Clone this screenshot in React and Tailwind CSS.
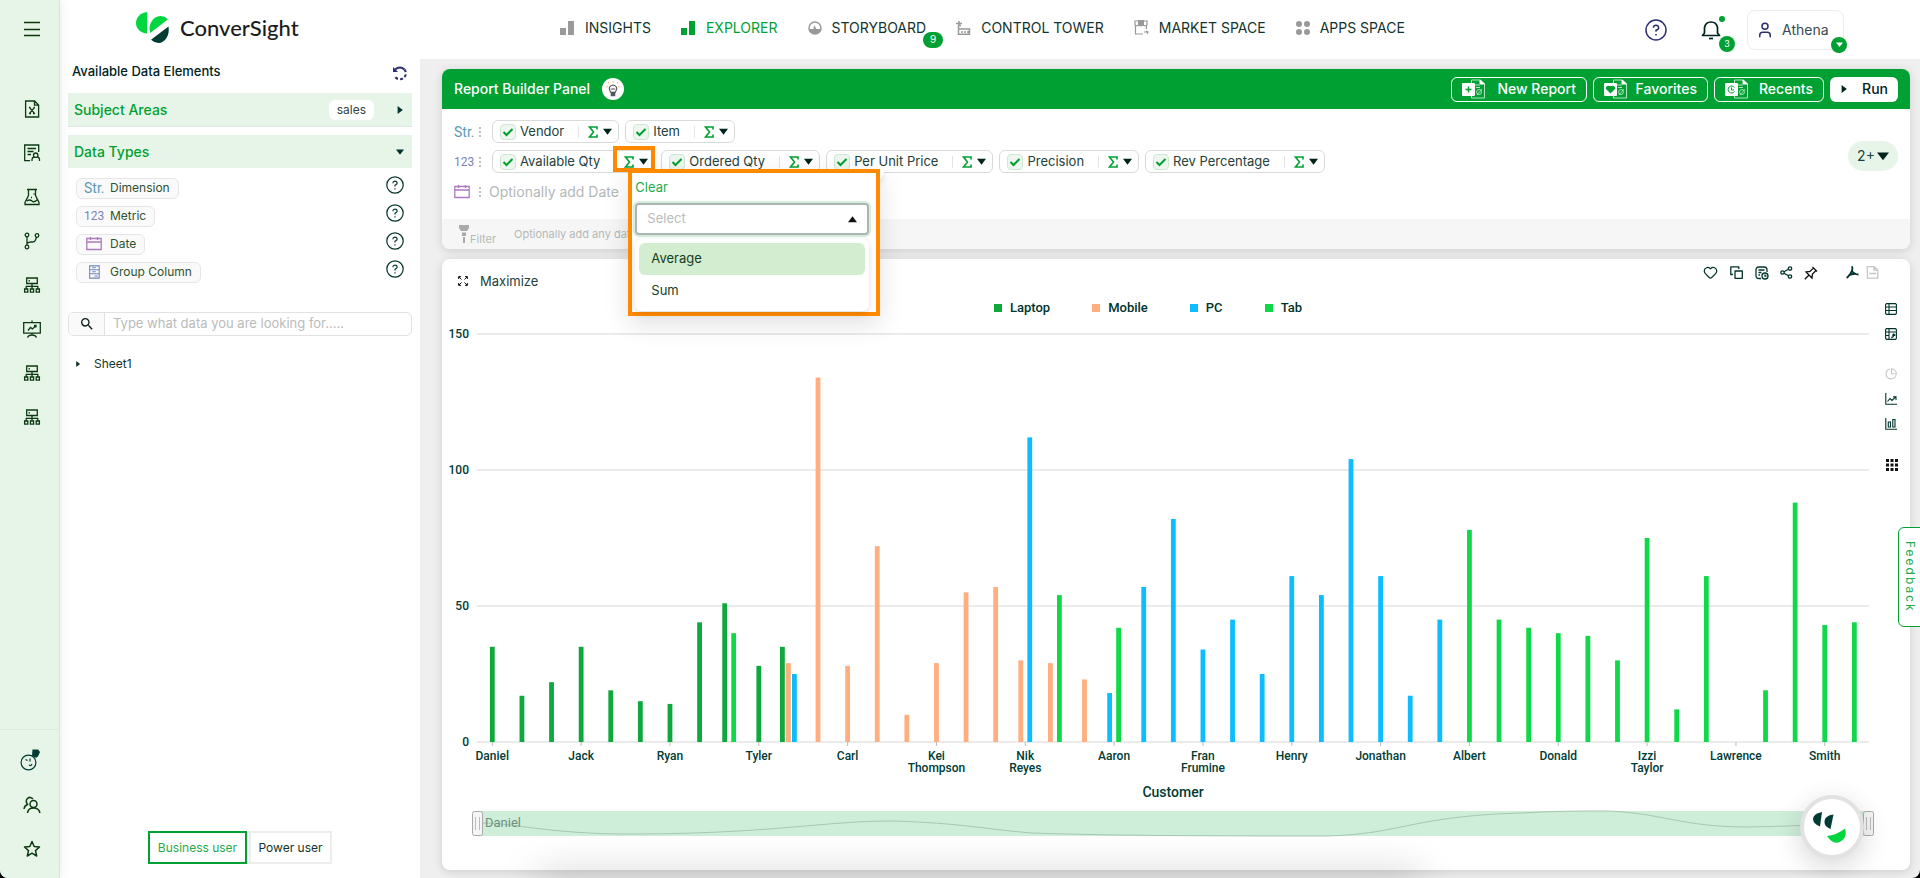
import { Heart, User } from 'lucide-react'
import { MdSearch } from 'react-icons/md'

const DATA = [
  { name: 'Daniel', laptop: 35 },
  { laptop: 17 },
  { laptop: 22 },
  { name: 'Jack', laptop: 35 },
  { laptop: 19 },
  { laptop: 15 },
  { name: 'Ryan', laptop: 14 },
  { laptop: 44 },
  { laptop: 51, tab: 40 },
  { name: 'Tyler', laptop: 28 },
  { laptop: 35, mobile: 29, pc: 25 },
  { mobile: 134 },
  { name: 'Carl', mobile: 28 },
  { mobile: 72 },
  { mobile: 10 },
  { name: 'Kei Thompson', mobile: 29 },
  { mobile: 55 },
  { mobile: 57 },
  { name: 'Nik Reyes', mobile: 30, pc: 112 },
  { mobile: 29, tab: 54 },
  { mobile: 23 },
  { name: 'Aaron', pc: 18, tab: 42 },
  { pc: 57 },
  { pc: 82 },
  { name: 'Fran Frumine', pc: 34 },
  { pc: 45 },
  { pc: 25 },
  { name: 'Henry', pc: 61 },
  { pc: 54 },
  { pc: 104 },
  { name: 'Jonathan', pc: 61 },
  { pc: 17 },
  { pc: 45 },
  { name: 'Albert', tab: 78 },
  { tab: 45 },
  { tab: 42 },
  { name: 'Donald', tab: 40 },
  { tab: 39 },
  { tab: 30 },
  { name: 'Izzi Taylor', tab: 75 },
  { tab: 12 },
  { tab: 61 },
  { name: 'Lawrence' },
  { tab: 19 },
  { tab: 88 },
  { name: 'Smith', tab: 43 },
  { tab: 44 },
]

const SERIES = [
  { key: 'laptop', label: 'Laptop', color: '#0fa83c' },
  { key: 'mobile', label: 'Mobile', color: '#ffae80' },
  { key: 'pc', label: 'PC', color: '#0dbdff' },
  { key: 'tab', label: 'Tab', color: '#0fd948' },
]

const METRICS = ['Ordered Qty', 'Per Unit Price', 'Precision', 'Rev Percentage']

/* ---------- icons ---------- */

function Icon({ size = 16, sw = 1.3, children, className, box = 16 }) {
  return (
    <svg
      width={size}
      height={size}
      viewBox={`0 0 ${box} ${box}`}
      fill="none"
      stroke="currentColor"
      strokeWidth={sw}
      className={className}
      aria-hidden="true"
    >
      {children}
    </svg>
  )
}

const MenuIcon = () => (
  <Icon size={16} sw={1.4}>
    <path d="M0 1.500h16M0 8.500h16M0 14.500h16" />
  </Icon>
)

const FileX = () => (
  <Icon size={18} box={18}>
    <path d="M2.600 1h9l4 4v12h-13zM11.500 1v4.200h4M6.800 7.800l4.400 5.400M11.200 7.800l-4.400 5.400M6 13.500h2M10 13.500h2M6 7.500h1.500M10.500 7.500h1.500" />
  </Icon>
)

const ReportUser = () => (
  <Icon size={18} box={18}>
    <path d="M7 16.700H1.700V1h14V8M4.500 4.500h8.500M4.500 7.500h6M4.500 10.500h3.500M9 17v-1.500q0-2 2-2.500M16.500 17v-1.500q0-2-2-2.500" />
    <circle cx="12.700" cy="11.200" r="2.200" />
  </Icon>
)

const Flask = () => (
  <Icon size={18} box={18}>
    <path d="M4 1.500h10M5.500 1.500v6L2 14.500v2h14v-2L12.500 7.500v-6M4 13q2.500-2 5 0t5.500-1.500M8 9.500h1M10.500 6h1" />
  </Icon>
)

const Branch = () => (
  <Icon size={18} box={18}>
    <circle cx="4" cy="3" r="1.800" />
    <circle cx="4" cy="15" r="1.800" />
    <circle cx="14" cy="3.500" r="1.800" />
    <path d="M4 4.800v8.400M4 11.500q1.500-1.500 4-1.500h1.500q2.500 0 3-2l1-2.800" />
  </Icon>
)

const Sitemap = () => (
  <Icon size={18} box={18}>
    <path d="M3.700 2h10.600v5.500H3.700zM5.500 4.800h1.500M9 7.500v6M3.200 13v-2.700h11.600V13M1.600 13h3.200v3.200H1.600zM7.400 13h3.200v3.200H7.400zM13.200 13h3.200v3.200h-3.200z" />
  </Icon>
)

const Board = () => (
  <Icon size={18} box={18}>
    <path d="M.7 2.700h16.600v10.500H.7zM9 .5v2.200M9 13v2M4.500 17.500q1-2.500 4.500-2.500t4.500 2.500M5 10.500l2.500-3 2 1.500L13 5.500M11 5.500h2v2" />
  </Icon>
)

const Athena = () => (
  <Icon size={24} box={24} sw={1.2} className="text-[#003c34]">
    <circle cx="8.500" cy="14.500" r="7.400" />
    <path d="M5.500 11.500l2 1M10 10.500v3M9 17q2 1.500 3-1" />
    <path d="M12.500 1.500h5.500l2 2.500-1.500 3.500-1.500 2h-2l-3-2z" fill="currentColor" stroke="none" />
  </Icon>
)

const Users = () => (
  <Icon size={18} box={18} sw={1.500}>
    <circle cx="10.500" cy="8" r="3.500" />
    <path d="M4.500 17q.5-5 6-5t6.500 5M1 13q.5-3.500 3.500-4.500Q2 5 4.500 2.500T10 3" />
  </Icon>
)

const Star = () => (
  <Icon size={18} box={18} sw={1.500}>
    <path d="M9 1.500l2.200 5 5.300.5-4 3.600 1.200 5.400L9 13.200 4.300 16l1.200-5.400-4-3.600 5.300-.5z" strokeLinejoin="round" />
  </Icon>
)

const Help = ({ size = 18 }) => (
  <Icon size={size} box={18} sw={1.200}>
    <circle cx="9" cy="9" r="8.200" />
    <path d="M6.800 7.200Q7 5.200 9 5.200t2.200 1.900Q11.200 8.500 9 9.200v1.300M9 12.200v1.200" />
  </Icon>
)

const Caret = ({ size = 8, dir = 'down', className }) => {
  const d = { down: 'M0 2h10L5 8.500z', right: 'M2 0v10L8.500 5z', up: 'M0 8h10L5 1.500z' }[dir]
  return (
    <svg width={size} height={size} viewBox="0 0 10 10" fill="currentColor" className={className} aria-hidden="true">
      <path d={d} />
    </svg>
  )
}

const StrIcon = () => <span className="w-5 font-['Roboto',sans-serif] text-sm leading-4 text-[#5b9bb0]">Str.</span>
const NumIcon = () => <span className="w-5 font-['Roboto',sans-serif] text-xs leading-4 text-[#7c83b5]">123</span>
const DateIcon = () => (
  <Icon size={16} className="text-[#ad7abf]">
    <path d="M.8 2.500h14.400v11H.8zM.8 6h14.400M4.500 1v3M11.500 1v3" />
  </Icon>
)
const GroupIcon = () => (
  <Icon size={14} sw={1.200} className="text-[#6f86bb]">
    <path d="M3 1h11v14H3zM3 5.500h11M3 10h11M6 3.200h4M6 7.800h4M8.500 12.500h4" />
  </Icon>
)

const Logo = () => (
  <svg width="34" height="32" viewBox="0 0 34 32" aria-hidden="true">
    <path d="M11 0v21.500C4.500 21 0 16.500 0 11S4.500.5 11 0z" fill="#00d63f" />
    <path d="M14.200 21C11.500 13 17 4 24.500 4q4 0 7.500 3.200z" fill="#00d63f" />
    <path d="M32.500 14.500C34 23 29 31 22.500 31q-4 0-7.500-3.200z" fill="#003c34" />
  </svg>
)

const ICONS_NAV = {
  bars: (
    <svg width="15" height="14" viewBox="0 0 15 14" fill="currentColor" aria-hidden="true">
      <path d="M0 7h6v7H0zM8 0h6v14H8z" />
    </svg>
  ),
  gauge: (
    <svg width="14" height="14" viewBox="0 0 14 14" aria-hidden="true">
      <circle cx="7" cy="7" r="6" fill="none" stroke="currentColor" strokeWidth="1.500" />
      <path d="M1.500 8h4L6 4l2.500 4h4q-1 5-5.500 5T1.500 8z" fill="currentColor" />
    </svg>
  ),
  tower: (
    <svg width="15" height="14" viewBox="0 0 15 14" aria-hidden="true">
      <path d="M0 2.500h6M3 0v4.500M2 4.500h3M2.500 5v8.200h11V8H3M6 10v2M9 10v2M12 10v2" fill="none" stroke="currentColor" strokeWidth="1.500" />
    </svg>
  ),
  market: (
    <svg width="15" height="15" viewBox="0 0 15 15" aria-hidden="true">
      <path d="M4 0h6v5q-3 2-6 0z" fill="currentColor" />
      <path d="M1 1h12v4q-2 1.500-4 0-2.500 1.500-4 0-2 1.500-4 0zM1.500 5v9H9M12.500 5v4M10 12h4M12 11l2 1-1 2" fill="none" stroke="currentColor" strokeWidth="1.200" />
    </svg>
  ),
  apps: (
    <svg width="14" height="14" viewBox="0 0 14 14" fill="currentColor" aria-hidden="true">
      <circle cx="3" cy="3" r="3" />
      <circle cx="11" cy="3" r="3" />
      <circle cx="3" cy="11" r="3" />
      <circle cx="11" cy="11" r="3" />
    </svg>
  ),
}

const NAV = [
  { icon: 'bars', label: 'INSIGHTS' },
  { icon: 'bars', label: 'EXPLORER', active: true },
  { icon: 'gauge', label: 'STORYBOARD', badge: 9 },
  { icon: 'tower', label: 'CONTROL TOWER' },
  { icon: 'market', label: 'MARKET SPACE' },
  { icon: 'apps', label: 'APPS SPACE' },
]

const RAIL = [
  { icon: <FileX />, label: 'Files' },
  { icon: <ReportUser />, label: 'Reports' },
  { icon: <Flask />, label: 'Lab' },
  { icon: <Branch />, label: 'Flows' },
  { icon: <Sitemap />, label: 'Datasets' },
  { icon: <Board />, label: 'Boards' },
  { icon: <Sitemap />, label: 'Connectors' },
  { icon: <Sitemap />, label: 'Servers' },
]

/* ---------- layout parts ---------- */

function Rail() {
  return (
    <aside className="relative z-10 flex w-15 shrink-0 flex-col items-center border-r border-[#d3e6d5] bg-[#e7f5e8] pl-1 text-[#0b3a12] shadow-[2px_0_10px_rgba(0,0,0,0.06)]">
      <button aria-label="Menu" className="mt-5 flex h-[18px] items-center">
        <MenuIcon />
      </button>
      <nav className="mt-[62px] flex flex-col gap-[26px]">
        {RAIL.map((item) => (
          <button key={item.label} aria-label={item.label}>
            {item.icon}
          </button>
        ))}
      </nav>
      <div className="mt-auto -ml-1 flex w-15 flex-col items-center gap-6 border-t border-[#dcebdd] pt-[18px] pb-5 pl-1">
        <button aria-label="Athena assistant">
          <Athena />
        </button>
        <button aria-label="Users">
          <Users />
        </button>
        <button aria-label="Starred" className="mt-0.5">
          <Star />
        </button>
      </div>
    </aside>
  )
}

function Header() {
  return (
    <header className="flex h-[59px] shrink-0 items-center bg-white">
      <div className="flex w-[500px] items-center gap-[10px] pb-1 pl-[76px]">
        <Logo />
        <span className="font-['Lato',sans-serif] text-[22px] leading-8 font-medium text-[#1c1c1c]">ConverSight</span>
      </div>
      <nav className="flex items-center gap-[30px] pb-1 text-sm">
        {NAV.map((item) => (
          <a key={item.label} href="#" className={`relative flex items-center gap-[10px] whitespace-nowrap ${item.active ? 'text-[#00a132]' : 'text-[#999]'}`}>
            {ICONS_NAV[item.icon]}
            <span className={item.active ? '' : 'text-[#12332d]'}>{item.label}</span>
            {item.badge && (
              <span className="absolute top-3.5 -right-[17px] flex h-4 w-5 items-center justify-center rounded-full bg-[#00a132] text-[10px] text-white">
                {item.badge}
              </span>
            )}
          </a>
        ))}
      </nav>
      <div className="ml-auto flex items-center pr-[76px]">
        <button aria-label="Help" className="mr-[34px] text-[#2b2f6b]">
          <Help size={22} />
        </button>
        <button aria-label="Notifications" className="relative mr-[26px] text-[#00231e]">
          <Icon size={20} box={20} sw={1.700}>
            <path d="M1.500 15.500h17l-2-2.500V7.500q-1-5.500-6.500-5.500T3.500 7.500V13z" strokeLinejoin="round" />
            <path d="M8 18.500h4" />
          </Icon>
          <span className="absolute -top-1 -right-1 size-1.5 rounded-full bg-[#00a132]" />
          <span className="absolute top-4 -right-3.5 flex size-4 items-center justify-center rounded-full bg-[#00a132] text-[9px] text-white">3</span>
        </button>
        <button className="relative flex h-10 w-[97px] items-center gap-2 rounded-lg border border-[#ececec] pl-2 text-sm text-[#3a4a52]">
          <User size={18} strokeWidth={2} className="text-[#2b2f6b]" />
          Athena
          <span className="absolute -right-1 -bottom-1 flex size-4 items-center justify-center rounded-full bg-[#00a132] text-white">
            <Caret size={7} />
          </span>
        </button>
      </div>
    </header>
  )
}

const TYPES = [
  { icon: <StrIcon />, label: 'Dimension' },
  { icon: <NumIcon />, label: 'Metric' },
  { icon: <DateIcon />, label: 'Date' },
  { icon: <GroupIcon />, label: 'Group Column' },
]

function DataPanel() {
  return (
    <section className="flex w-[360px] shrink-0 flex-col bg-white px-2 text-[#12332d]">
      <div className="flex h-[34px] items-center justify-between pr-1 pl-1">
        <h2 className="pb-2 text-[13px] font-medium text-[#00231e]">Available Data Elements</h2>
        <button aria-label="Reset" className="pb-1 text-[#2b2f6b]">
          <Icon sw={2}>
            <path d="M3 3.500Q8-.5 12.500 3.500" />
            <path d="M12.500 3.500a6 6 0 1 1-10 6.500" strokeDasharray="3 2" />
            <path d="M1 1v5h5z" fill="currentColor" stroke="none" />
          </Icon>
        </button>
      </div>
      <button className="flex h-[34px] items-center border-b border-[#dfe6df] bg-[#e7f5e8] pr-2 pl-1.5 text-sm font-medium text-[#00a132]">
        Subject Areas
        <span className="ml-auto rounded-md bg-white px-2 text-xs leading-5 font-normal text-[#33453f]">sales</span>
        <Caret dir="right" className="ml-[22px] text-[#00332b]" />
      </button>
      <button className="mt-2 flex h-[33px] items-center justify-between bg-[#e7f5e8] pr-2 pl-1.5 text-sm font-medium text-[#00a132]">
        Data Types
        <Caret className="text-[#00332b]" />
      </button>
      <ul className="mt-1 flex flex-col px-2">
        {TYPES.map((t) => (
          <li key={t.label} className="flex h-7 items-center justify-between">
            <span className="mt-1 flex h-[21px] items-center rounded-md border border-[#e6e6e6] bg-[#fafafa] pr-2 pl-[7px] text-xs text-[#2f5230]">
              <span className="mr-1.5 flex w-5 justify-center">{t.icon}</span>
              {t.label}
            </span>
            <button aria-label={`About ${t.label}`} className="-mt-0.5 text-[#00332b]">
              <Help />
            </button>
          </li>
        ))}
      </ul>
      <label className="mt-7 flex h-6 overflow-hidden rounded-md border border-[#e2e2e2]">
        <span className="flex w-9 items-center justify-center border-r border-[#e2e2e2] bg-[#fafafa] text-[#0a1f1b]">
          <MdSearch size={16} aria-label="Search" />
        </span>
        <input className="min-w-0 flex-1 px-2 text-[13px] outline-none placeholder:text-[#b9bcbb]" placeholder="Type what data you are looking for....." />
      </label>
      <button className="mt-5 flex items-center gap-[13px] pl-[7px] text-xs">
        <Caret size={6} dir="right" />
        Sheet1
      </button>
      <div className="mt-auto mb-3.5 flex justify-center gap-0.5 text-xs">
        <button className="h-[33px] w-[99px] border-2 border-[#00a132] whitespace-nowrap text-[#1fac4b]">Business user</button>
        <button className="h-[33px] w-[83px] border-2 border-[#ededed] whitespace-nowrap">Power user</button>
      </div>
    </section>
  )
}

const Check = () => (
  <span className="flex size-4 items-center justify-center rounded border border-[#cfe8d3] bg-[#eef7ef] text-[#00a132]">
    <Icon size={12} box={12} sw={2}>
      <path d="M1.500 6l3 3 6-6" />
    </Icon>
  </span>
)

const Sigma = () => (
  <svg width="10" height="12" viewBox="0 0 10 12" fill="none" stroke="#00a132" strokeWidth="1.600" aria-hidden="true">
    <path d="M9 3.500V1H1.500L5.500 6l-4 5H9V8.500" />
  </svg>
)

function Chip({ label, open }) {
  return (
    <div className="relative flex h-[23px] items-center rounded-md border border-[#d8dbda] bg-white pr-1.5 pl-[7px] text-[13px] whitespace-nowrap text-[#23413b]">
      <Check />
      <span className="mr-3.5 ml-1">{label}</span>
      <span className="mr-[9px] h-3 border-l border-[#e4e4e4]" />
      <button className="flex items-center gap-[5px] text-[#00231e]" aria-label={`${label} aggregation`}>
        <Sigma />
        <Caret size={9} />
      </button>
      {open && (
        <>
          <span className="absolute -top-[5px] -right-px z-20 h-[26px] w-[42px] border-4 border-[#ff8a00]" />
          <span className="absolute top-3.5 -right-[230px] z-20 size-4 rounded-full bg-white shadow-md" />
          <Aggregation />
        </>
      )}
    </div>
  )
}

function Aggregation() {
  return (
    <div className="absolute top-[18px] -right-[226px] z-30 h-[147px] w-[252px] border-4 border-[#ff8a00] bg-white px-[3px] pt-[5px] shadow-[0_8px_24px_rgba(0,0,0,0.12)]">
      <button className="block text-[13px] leading-[18px] text-[#1fac4b]">Clear</button>
      <button className="mt-[7px] flex h-8 w-[234px] items-center justify-between rounded border-2 border-[#a9b6b4] pr-2.5 pl-2.5 text-[13px] text-[#b9bcbb] ring-2 ring-[#d8eedb]">
        Select
        <Caret size={9} dir="up" className="text-[#111]" />
      </button>
      <ul className="mt-1 w-[234px] rounded-md p-1 text-[13px] text-[#163d1d] shadow-[0_2px_6px_rgba(0,0,0,0.14)]">
        <li className="flex h-8 items-center rounded-md bg-[#d2edd0] px-3">Average</li>
        <li className="flex h-8 items-center px-3">Sum</li>
      </ul>
    </div>
  )
}

const Dots = () => (
  <svg width="3" height="10" viewBox="0 0 3 10" fill="#bcc2c0" aria-hidden="true">
    <path d="M0 0h2v2H0zM0 4h2v2H0zM0 8h2v2H0z" />
  </svg>
)

const DocIcon = ({ children }) => (
  <svg width="24" height="20" viewBox="0 0 24 20" fill="none" stroke="white" aria-hidden="true">
    <path d="M9.500 4V1h9l4 4v14h-13v-3M12 6h6M14 8.500h4" opacity=".7" />
    <path d="M18 1v4h4.500z" fill="white" />
    <circle cx="17" cy="13" r="2.500" opacity=".6" />
    <path d="M15 16l5-6" opacity=".6" />
    <rect x="0" y="4" width="13" height="13" rx="1" fill="white" stroke="none" />
    <g stroke="#00a132" strokeWidth="1.500">{children}</g>
  </svg>
)

const ACTIONS = [
  { label: 'New Report', width: 'w-[136px]', icon: <path d="M3.500 10.500h6M6.500 7.500v6" /> },
  { label: 'Favorites', width: 'w-[115px]', icon: <path d="M6.500 13.500l-4-4q0-3 4-1.500 4-1.500 4 1.500z" fill="#00a132" /> },
  { label: 'Recents', width: 'w-[110px]', icon: <path d="M9.500 8.500a3.500 3.500 0 1 0 0 4M6.500 8.500v2.500h2.500" strokeWidth="1" /> },
]

function Builder() {
  return (
    <section className="rounded-lg bg-white shadow-[0_2px_10px_rgba(0,0,0,0.14)]">
      <div className="flex h-10 items-center gap-3 rounded-t-lg bg-[#00a132] px-3 text-sm font-medium text-white">
        <h1 className="whitespace-nowrap">Report Builder Panel</h1>
        <span className="flex size-[22px] items-center justify-center rounded-full bg-white text-[#555]">
          <Icon size={18} sw={1}>
            <path d="M5.500 10q-2.500-4.500 2.500-5.500 5 1 2.500 5.500l-.5 1h-4zM6 8h4" />
            <path d="M6.500 12h3v2h-3z" fill="currentColor" />
            <path d="M8 1v1.500M2 6h1.500M12.500 6H14M3.500 2l1 1M12.500 2l-1 1" stroke="#ffab6b" />
          </Icon>
        </span>
        <div className="ml-auto flex gap-1.5">
          {ACTIONS.map((a) => (
            <button key={a.label} className={`flex h-[25px] items-center justify-between rounded-md border border-white px-2.5 whitespace-nowrap ${a.width}`}>
              <DocIcon>{a.icon}</DocIcon>
              {a.label}
            </button>
          ))}
          <button className="flex h-[25px] w-[68px] items-center justify-between rounded-md bg-white px-2.5 text-[#00231e]">
            <Caret dir="right" />
            Run
          </button>
        </div>
      </div>
      <div className="flex h-[110px] items-center px-3">
        <div className="flex h-full flex-col gap-[7px] pt-[11px]">
          <div className="flex items-center gap-1.5">
            <span className="flex w-8 items-center gap-[5px]"><StrIcon /><Dots /></span>
            <Chip label="Vendor" />
            <Chip label="Item" />
          </div>
          <div className="flex items-center gap-1.5">
            <span className="flex w-8 items-center gap-[5px]"><NumIcon /><Dots /></span>
            <Chip label="Available Qty" open />
            {METRICS.map((m) => (
              <Chip key={m} label={m} />
            ))}
          </div>
          <div className="flex h-6 items-center gap-[7px] text-sm text-[#b3b8b6]">
            <span className="flex w-7 items-center justify-between"><DateIcon /><Dots /></span>
            Optionally add Date
          </div>
        </div>
        <button className="-mt-4 ml-auto flex h-[30px] w-[50px] items-center justify-center gap-0.5 rounded-full bg-[#e7f5e8] text-sm text-[#23413b]">
          2+
          <Caret size={12} className="text-[#00231e]" />
        </button>
      </div>
      <div className="flex h-[30px] items-center rounded-b-lg bg-[#f6f6f6] pl-4 text-[11px] text-[#b3b8b6]">
        <svg width="12" height="18" viewBox="0 0 12 18" fill="#a9a9a9" aria-hidden="true">
          <path d="M1 0h10v3L9 6H3L1 3zM4 7.500h4v3.500H4zM5 12h2v6H5z" />
        </svg>
        <span className="mt-2.5">Filter</span>
        <span className="ml-[18px]">Optionally add any data</span>
      </div>
    </section>
  )
}

/* ---------- chart ---------- */

const X0 = 35.5
const STEP = 29.61
const BASE = 422
const UNIT = 2.72

function Bars({ row, i }) {
  const present = SERIES.filter((s) => row[s.key])
  const gap = present.length === 3 ? 6 : 9
  const center = X0 + STEP * (i + 0.5)
  return present.map((s, n) => (
    <rect
      key={s.key}
      x={center - 2.4 + (n - (present.length - 1) / 2) * gap}
      y={BASE - row[s.key] * UNIT}
      width="4.800"
      height={row[s.key] * UNIT}
      fill={s.color}
    />
  ))
}

function Chart() {
  return (
    <svg viewBox="0 0 1432 526" className="block h-auto w-full font-['Roboto',sans-serif]" role="img" aria-label="Quantity by customer">
      {[0, 50, 100, 150].map((v) => (
        <g key={v}>
          <line x1="35" x2="1427" y1={BASE - v * UNIT} y2={BASE - v * UNIT} stroke="#ebebeb" strokeWidth="2" />
          <text x="27" y={BASE - v * UNIT + 4} textAnchor="end" fontSize="12" fontWeight="500" fill="#003c34">{v}</text>
        </g>
      ))}
      {DATA.map((row, i) => (
        <Bars key={i} row={row} i={i} />
      ))}
      {DATA.map((row, i) => {
        if (!row.name) return null
        const x = X0 + STEP * (i + 0.5)
        return (
          <g key={row.name}>
            <line x1={x} x2={x} y1={BASE} y2={BASE + 4} stroke="#bbb" />
            <text textAnchor="middle" fontSize="12" fontWeight="500" fill="#003c34">
              {row.name.split(' ').map((word, n) => (
                <tspan key={word} x={x} y={BASE + 18 + n * 12}>{word}</tspan>
              ))}
            </text>
          </g>
        )
      })}
      <text x="731" y="477" textAnchor="middle" fontSize="14" fontWeight="500" fill="#003c34">Customer</text>

      {/* range slider */}
      <rect x="35" y="491" width="1392" height="25" fill="#ceeed9" />
      <path
        d="M41 503C70 503 110 514 185 514C330 514 380 501 450 501C520 503 540 509 590 513C650 515 720 516 885 516C960 514 970 496 1080 493C1110 491 1140 491 1165 491C1220 493 1240 507 1305 507C1360 506 1390 504 1420 502"
        fill="none"
        stroke="#a5c8b2"
      />
      <text x="43" y="507" fontSize="13" fill="#6f8f7e">Daniel</text>
      {[30.5, 1421.5].map((x) => (
        <g key={x} fill="#f5f5f5" stroke="#aaa">
          <rect x={x} y="491.500" width="10" height="24" rx="2" />
          <path d={`M${x + 3} 497v13M${x + 7} 497v13`} stroke="#bbb" />
        </g>
      ))}
    </svg>
  )
}

const TOOLS = [
  { label: 'Favorite', icon: <Heart size={15} strokeWidth={2} /> },
  {
    label: 'Copy',
    icon: <Icon size={13} box={13} className="mx-px"><path d="M5 5h7.300v7.300H5zM3 8.500H.8V.8h8V3" strokeLinejoin="round" /></Icon>,
  },
  {
    label: 'Schedule',
    icon: <Icon size={14} box={14}><path d="M6 12.500H4q-3 0-3-3V4q0-3 3-3h5q3 0 3 3v2M3.500 4h6M3.500 6.500h3M3.500 9H5" /><circle cx="10" cy="10" r="3" /><path d="M10 8.500V10h1.500" /></Icon>,
  },
  {
    label: 'Share',
    icon: <Icon size={13} box={13}><circle cx="2.500" cy="6.500" r="1.700" /><circle cx="10" cy="2.500" r="1.700" /><circle cx="10" cy="10.500" r="1.700" /><path d="M4 5.700l4.500-2.400M4 7.300l4.500 2.400" /></Icon>,
  },
  {
    label: 'Pin',
    icon: <Icon size={14} box={14} className="text-[#111]"><path d="M8.500 1l4.500 4.500M9.500 2L6 5.500l-4 .5 6 6 .5-4L12 4.500M4.800 9.200L.8 13.200" /></Icon>,
  },
]

const VIEWS = [
  { label: 'Table', icon: <path d="M1.500.6h9l.9.9v9l-.9.9h-9l-.9-.9v-9zM.6 4h10.800M4 .6v10.800M.6 7.500h10.800" />, gap: 'mt-[3px]' },
  { label: 'Pivot', icon: <path d="M1.500.6h9l.9.9v9l-.9.9h-9l-.9-.9v-9zM.6 4h10.800M4 .6v10.800M.6 7.500H4M6 9.500q2.800 0 2.800-3M7.300 7.500L8.800 6l1.500 1.500" />, gap: 'mt-[13px]' },
  { label: 'Pie chart', icon: <path d="M5 1a5 5 0 1 0 6 6M6.500.8v5h5Q11 1.500 6.500.8z" />, gap: 'mt-7', muted: true },
  { label: 'Line chart', icon: <path d="M.8 0v11.300H12M2.500 8.500l2.500-3 2 2L10.500 4M8 3.700h3V7" />, gap: 'mt-[13px]' },
  { label: 'Bar chart', icon: <path d="M.8 0v11.300H12M3.300 4h2.200v5H3.300zM7.800 1.500H10V9H7.800z" />, gap: 'mt-[13px]' },
]

function ChartCard() {
  return (
    <section className="flex flex-1 flex-col rounded-lg bg-white text-[#00332b] shadow-[0_2px_10px_rgba(0,0,0,0.14)]">
      <div className="flex h-[41px] items-start justify-between pr-[31px] pl-4">
        <button className="mt-3 flex items-center gap-3 text-[13px] leading-5 text-[#23413b]">
          <Icon size={10} box={10} className="text-[#111]">
            <path d="M.6 3V.6H3M7 .6h2.400V3M9.400 7v2.400H7M3 9.400H.6V7M1 1l2.500 2.500M9 1L6.500 3.500M9 9L6.500 6.500M1 9l2.500-2.500" strokeWidth="1" />
          </Icon>
          Maximize
        </button>
        <div className="mt-1.5 flex h-[15px] items-center gap-[11px]">
          {TOOLS.map((t) => (
            <button key={t.label} aria-label={t.label}>{t.icon}</button>
          ))}
          <button aria-label="Export PDF" className="ml-[17px]">
            <Icon size={13} box={13} sw={1.800}>
              <path d="M5.500.5Q7 1 6 4.500T.8 12M6 4.500Q7.500 8.500 12.500 8.500M2.500 9.500Q6 7.500 10 7.800" />
            </Icon>
          </button>
          <button aria-label="Export XLSX" className="-ml-1 text-[#c4c8c6]">
            <Icon size={13} box={13}><path d="M1.300.7h7l3.500 3.500v8H1.300zM8 .7v3.500h3.800M3 7.500h7" /></Icon>
          </button>
        </div>
      </div>
      <div className="flex">
        <div className="min-w-0 flex-1">
          <ul className="flex h-5 items-start justify-center gap-[42px] pr-5 font-['Roboto',sans-serif] text-[13px] leading-4 font-medium">
            {SERIES.map((s) => (
              <li key={s.key} className="flex items-center gap-2">
                <span className="size-2" style={{ background: s.color }} />
                {s.label}
              </li>
            ))}
          </ul>
          <Chart />
        </div>
        <div className="flex w-9 shrink-0 flex-col items-center pr-0.5">
          {VIEWS.map((v) => (
            <button key={v.label} aria-label={v.label} className={`${v.gap} ${v.muted ? 'text-[#c4c8c6]' : ''}`}>
              <Icon size={12} box={12} sw={1.100}>{v.icon}</Icon>
            </button>
          ))}
          <button aria-label="More charts" className="mt-[29px] ml-0.5">
            <svg width="12" height="12" viewBox="0 0 12 12" fill="#111" aria-hidden="true">
              <path d="M0 0h3v3H0zM4.500 0h3v3h-3zM9 0h3v3H9zM0 4.500h3v3H0zM4.500 4.500h3v3h-3zM9 4.500h3v3H9zM0 9h3v3H0zM4.500 9h3v3h-3zM9 9h3v3H9z" />
            </svg>
          </button>
        </div>
      </div>
    </section>
  )
}

export default function App() {
  return (
    <div className="bg-black">
      <div className="relative flex min-h-screen overflow-hidden rounded-b-lg bg-[#efefef] font-['Inter',sans-serif]">
        <Rail />
        <div className="flex min-w-0 flex-1 flex-col">
          <Header />
          <div className="flex flex-1">
            <DataPanel />
            <main className="flex min-w-0 flex-1 flex-col gap-2.5 pt-2.5 pr-2.5 pb-2 pl-[22px]">
              <Builder />
              <ChartCard />
            </main>
          </div>
        </div>
        <button className="absolute top-[527px] -right-px flex h-[100px] w-[23px] items-center justify-center rounded-l-md border border-[#00a132] bg-white text-xs tracking-[2px] text-[#1fac4b] [writing-mode:vertical-rl]">
          Feedback
        </button>
        <button aria-label="Chat with Athena" className="absolute right-14 bottom-[19px] flex size-16 items-center justify-center rounded-full border-4 border-[#e2e2e2] bg-white shadow-[0_8px_28px_rgba(0,0,0,0.16)]">
          <svg width="40" height="36" viewBox="0 0 40 36" aria-hidden="true">
            <path d="M10 3L8 17.500Q1 15 1 10t9-7z" fill="#003c34" />
            <path d="M21.500 5.500L18.500 20Q12 17.500 12.500 12t9-6.500z" fill="#003c34" />
            <path d="M15 27q10-1 18-7.500 2.500 8-3 12-8 6-15-4.500z" fill="#00d63f" />
          </svg>
        </button>
        <div className="pointer-events-none absolute top-full left-[28%] h-4 w-[46%] shadow-[0_0_40px_rgba(0,0,0,0.3)]" />
      </div>
    </div>
  )
}
